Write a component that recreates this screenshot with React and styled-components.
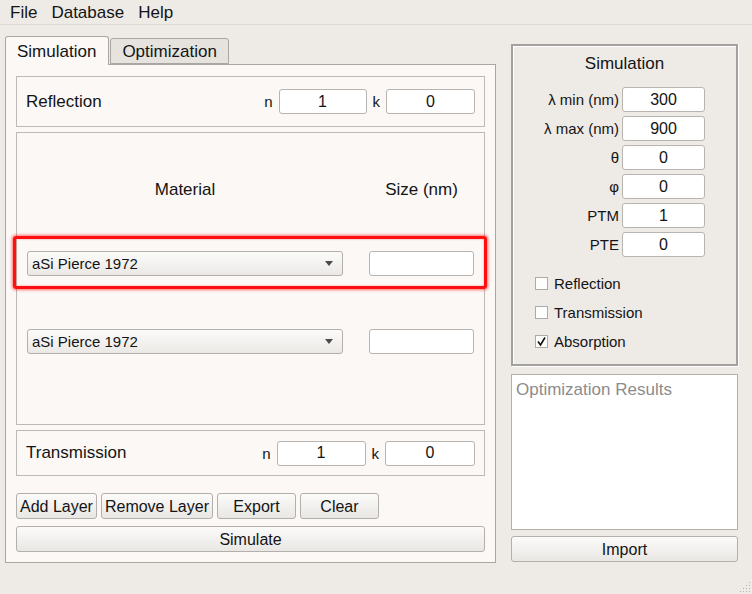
import React from "react";
import styled, { createGlobalStyle } from "styled-components";

const GlobalStyle = createGlobalStyle`
  html, body {
    margin: 0;
    padding: 0;
    background: #eeebe7;
  }
  body {
    font-family: "Liberation Sans", Arial, sans-serif;
    color: #141414;
    width: 752px;
    height: 594px;
    overflow: hidden;
  }
`;

const Window = styled.div`
  position: relative;
  width: 752px;
  height: 594px;
  background: #eeebe7;
`;

const MenuBar = styled.div`
  display: flex;
  height: 24px;
  padding-left: 3px;
  border-bottom: 1px solid #dcd9d5;
  font-size: 17px;
`;

const MenuItem = styled.div`
  padding: 1px 7px 0 7px;
  line-height: 24px;
`;

const Main = styled.div`
  display: flex;
  gap: 15px;
  padding: 11px 0 0 5px;
`;

const LeftColumn = styled.div`
  width: 491px;
  display: flex;
  flex-direction: column;
`;

const TabBar = styled.div`
  display: flex;
  align-items: flex-end;
  height: 28px;
`;

const Tab = styled.div`
  box-sizing: border-box;
  height: ${(p) => (p.$active ? "29px" : "26px")};
  margin-bottom: ${(p) => (p.$active ? "-1px" : "0")};
  padding: ${(p) => (p.$active ? "1px 12px 0 11px" : "1px 11px 0 11px")};
  border: 1px solid #aaa7a3;
  border-bottom: ${(p) => (p.$active ? "none" : "1px solid #aaa7a3")};
  border-radius: 3px 3px 0 0;
  background: ${(p) => (p.$active ? "#fbf8f5" : "#e6e3df")};
  font-size: 17px;
  display: flex;
  align-items: center;
  position: relative;
  z-index: ${(p) => (p.$active ? 1 : 0)};
  margin-left: ${(p) => (p.$active ? "0" : "1px")};
`;

const TabPanel = styled.div`
  box-sizing: border-box;
  height: 499px;
  border: 1px solid #aaa7a3;
  background: #fbf8f5;
  padding: 11px 10px 10px 10px;
  display: flex;
  flex-direction: column;
`;

const MediumBox = styled.div`
  box-sizing: border-box;
  height: ${(p) => p.$h}px;
  border: 1px solid #bdbab6;
  display: flex;
  align-items: center;
  padding: 0 9px 0 9px;
  margin-bottom: 5px;
`;

const BoxLabel = styled.div`
  font-size: 17px;
  flex: 1;
`;

const SmallLabel = styled.span`
  font-size: 15px;
  margin: 0 6px 0 0;
`;

const ValueInput = styled.div`
  box-sizing: border-box;
  width: ${(p) => p.$w || 89}px;
  height: 25px;
  background: #fff;
  border: 1px solid #b8b5b1;
  border-radius: 3px;
  display: flex;
  align-items: center;
  justify-content: center;
  font-size: 16px;
  margin-right: ${(p) => p.$mr || 0}px;
`;

const LayersBox = styled.div`
  box-sizing: border-box;
  height: 293px;
  border: 1px solid #bdbab6;
  margin-bottom: 5px;
  display: flex;
  flex-direction: column;
`;

const HeaderRow = styled.div`
  display: grid;
  grid-template-columns: 316px 105px;
  column-gap: 26px;
  padding-left: 10px;
  margin-top: 47px;
  font-size: 17px;
  line-height: 20px;
  text-align: center;
`;

const LayerRow = styled.div`
  position: relative;
  display: grid;
  grid-template-columns: 316px 105px;
  column-gap: 26px;
  padding-left: 10px;
  margin-top: ${(p) => p.$mt}px;
`;

const Highlight = styled.div`
  position: absolute;
  left: -4px;
  right: -3px;
  top: -15px;
  bottom: -13px;
  border: 3px solid #ff1010;
  border-radius: 3px;
  box-shadow: 0 0 3px 1px rgba(255, 0, 0, 0.55), inset 0 0 2px rgba(255, 0, 0, 0.5);
  pointer-events: none;
`;

const Select = styled.div`
  box-sizing: border-box;
  height: 25px;
  border: 1px solid #b3b0ac;
  border-radius: 3px;
  background: linear-gradient(#fbfbfa, #ebe9e6);
  display: flex;
  align-items: center;
  justify-content: space-between;
  padding: 0 9px 0 4px;
  font-size: 15px;
`;

const Arrow = styled.span`
  width: 0;
  height: 0;
  border-left: 4px solid transparent;
  border-right: 4px solid transparent;
  border-top: 5px solid #4a4a4a;
`;

const ButtonRow = styled.div`
  display: flex;
  gap: 4px;
  margin-top: 12px;
`;

const Button = styled.div`
  box-sizing: border-box;
  height: 26px;
  min-width: ${(p) => p.$min || 0}px;
  padding: 1px 3px 0 3px;
  border: 1px solid #b3b0ac;
  border-radius: 3px;
  background: linear-gradient(#fbfbfa, #e9e7e4);
  display: flex;
  align-items: center;
  justify-content: center;
  font-size: 16px;
  margin-top: ${(p) => p.$mt || 0}px;
`;

const RightColumn = styled.div`
  width: 227px;
  margin-top: 8px;
  display: flex;
  flex-direction: column;
`;

const GroupBox = styled.div`
  box-sizing: border-box;
  height: 322px;
  border: 2px solid #a3a19e;
  box-shadow: inset 1px 1px 0 #fff, 1px 1px 0 #fff;
  display: flex;
  flex-direction: column;
`;

const GroupTitle = styled.div`
  text-align: center;
  font-size: 17px;
  line-height: 20px;
  margin-top: 8px;
`;

const FormGrid = styled.div`
  display: grid;
  grid-template-columns: 106px 83px;
  column-gap: 3px;
  row-gap: 4px;
  margin-top: 13px;
  align-items: center;
`;

const FormLabel = styled.div`
  text-align: right;
  font-size: 15px;
`;

const CheckList = styled.div`
  display: flex;
  flex-direction: column;
  padding-left: 22px;
  margin-top: 12px;
`;

const CheckRow = styled.div`
  display: flex;
  align-items: center;
  gap: 6px;
  height: 29px;
  font-size: 15px;
`;

const Box = styled.span`
  box-sizing: border-box;
  width: 13px;
  height: 13px;
  border: 1px solid #aeaba7;
  background: #fdfdfc;
  display: flex;
  align-items: center;
  justify-content: center;
`;

const Results = styled.div`
  box-sizing: border-box;
  height: 156px;
  margin-top: 8px;
  border: 1px solid #b3b0ac;
  background: #fff;
  padding: 5px 4px;
  font-size: 17px;
  color: #8c8c8c;
`;

const Grip = styled.svg`
  position: absolute;
  right: 1px;
  bottom: 1px;
`;

const Check = () => (
  <svg width="11" height="11" viewBox="0 0 11 11">
    <path d="M2 5.5 L4.5 9 L9 1.5" fill="none" stroke="#111" strokeWidth="1.6" />
  </svg>
);

const simFields = [
  ["λ min (nm)", "300"],
  ["λ max (nm)", "900"],
  ["θ", "0"],
  ["φ", "0"],
  ["PTM", "1"],
  ["PTE", "0"],
];

const checks = [
  ["Reflection", false],
  ["Transmission", false],
  ["Absorption", true],
];

export default function App() {
  return (
    <Window>
      <GlobalStyle />
      <MenuBar>
        <MenuItem>File</MenuItem>
        <MenuItem>Database</MenuItem>
        <MenuItem>Help</MenuItem>
      </MenuBar>
      <Main>
        <LeftColumn>
          <TabBar>
            <Tab $active>Simulation</Tab>
            <Tab>Optimization</Tab>
          </TabBar>
          <TabPanel>
            <MediumBox $h={51}>
              <BoxLabel>Reflection</BoxLabel>
              <SmallLabel>n</SmallLabel>
              <ValueInput $w={88} $mr={6}>1</ValueInput>
              <SmallLabel>k</SmallLabel>
              <ValueInput $w={89}>0</ValueInput>
            </MediumBox>
            <LayersBox>
              <HeaderRow>
                <div>Material</div>
                <div>Size (nm)</div>
              </HeaderRow>
              <LayerRow $mt={51}>
                <Highlight />
                <Select>
                  aSi Pierce 1972
                  <Arrow />
                </Select>
                <ValueInput $w={105} />
              </LayerRow>
              <LayerRow $mt={53}>
                <Select>
                  aSi Pierce 1972
                  <Arrow />
                </Select>
                <ValueInput $w={105} />
              </LayerRow>
            </LayersBox>
            <MediumBox $h={46}>
              <BoxLabel>Transmission</BoxLabel>
              <SmallLabel>n</SmallLabel>
              <ValueInput $w={89} $mr={6}>1</ValueInput>
              <SmallLabel>k</SmallLabel>
              <ValueInput $w={90}>0</ValueInput>
            </MediumBox>
            <ButtonRow>
              <Button>Add Layer</Button>
              <Button>Remove Layer</Button>
              <Button $min={79}>Export</Button>
              <Button $min={79}>Clear</Button>
            </ButtonRow>
            <Button $mt={7}>Simulate</Button>
          </TabPanel>
        </LeftColumn>
        <RightColumn>
          <GroupBox>
            <GroupTitle>Simulation</GroupTitle>
            <FormGrid>
              {simFields.map(([label, value]) => (
                <React.Fragment key={label}>
                  <FormLabel>{label}</FormLabel>
                  <ValueInput $w={83}>{value}</ValueInput>
                </React.Fragment>
              ))}
            </FormGrid>
            <CheckList>
              {checks.map(([label, on]) => (
                <CheckRow key={label}>
                  <Box>{on && <Check />}</Box>
                  {label}
                </CheckRow>
              ))}
            </CheckList>
          </GroupBox>
          <Results>Optimization Results</Results>
          <Button $mt={6}>Import</Button>
        </RightColumn>
      </Main>
      <Grip width="12" height="12" viewBox="0 0 12 12">
        {[
          [10, 2], [10, 5], [10, 8], [10, 11],
          [7, 5], [7, 8], [7, 11],
          [4, 8], [4, 11],
          [1, 11],
        ].map(([x, y]) => (
          <rect key={`${x}-${y}`} x={x} y={y - 1} width="1" height="1" fill="#b5b2ae" />
        ))}
      </Grip>
    </Window>
  );
}
